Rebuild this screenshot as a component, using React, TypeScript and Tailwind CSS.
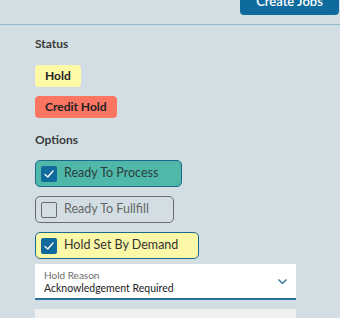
import React from "react";

function Check({ checked }: { checked: boolean }) {
  if (!checked) {
    return <div className="w-[16px] h-[16px] rounded-[2px] border border-[#6b6b6b] bg-transparent shrink-0" />;
  }
  return (
    <div className="w-[16px] h-[16px] rounded-[2px] bg-[#116a9c] shrink-0 flex items-center justify-center">
      <svg width="12" height="12" viewBox="0 0 12 12" fill="none">
        <path d="M2 6.5 L4.8 9 L10 3" stroke="white" strokeWidth="1.3" strokeLinecap="round" strokeLinejoin="round" />
      </svg>
    </div>
  );
}

export default function App() {
  return (
    <div
      className="w-[340px] h-[318px] overflow-hidden bg-[#d2dee3] text-[#333]"
      style={{ fontFamily: "Lato, 'Liberation Sans', sans-serif" }}
    >
      <div className="h-[25px] border-b border-[#8fbacb] flex justify-end items-start pr-[1px]">
        <div className="w-[99px] h-[15px] bg-[#0f6b9e] rounded-b-[4px] flex justify-center items-start overflow-hidden">
          <span className="block mt-[-5px] text-white text-[13px] font-semibold leading-[13px]">Create Jobs</span>
        </div>
      </div>
      <div className="pl-[35px] flex flex-col items-start">
        <div className="mt-[11px] text-[12px] font-bold leading-[16px] text-[#3a3a3a]">Status</div>
        <div className="mt-[13px] h-[22px] px-[10px] rounded-[4px] bg-[#fdf9a6] text-[12px] font-bold leading-[22px] text-[#222]">Hold</div>
        <div className="mt-[9px] h-[22px] px-[10px] rounded-[4px] bg-[#fb7563] text-[12px] font-bold leading-[22px] text-[#222]">Credit Hold</div>
        <div className="mt-[14px] text-[12px] font-bold leading-[16px] text-[#3a3a3a]">Options</div>
        <div className="mt-[12px] w-[147px] h-[27px] rounded-[5px] border border-[#1b6a8b] bg-[#4fb8a9] flex items-center pl-[5px] gap-[7px]">
          <Check checked />
          <span className="text-[12.5px] leading-none text-[#2b3d3d]">Ready To Process</span>
        </div>
        <div className="mt-[9px] w-[139px] h-[27px] rounded-[5px] border border-[#6b6b6b] flex items-center pl-[5px] gap-[7px]">
          <Check checked={false} />
          <span className="text-[12.5px] leading-none text-[#666]">Ready To Fullfill</span>
        </div>
        <div className="mt-[9px] w-[164px] h-[27px] rounded-[5px] border border-[#1b6a8b] bg-[#fbf8a8] flex items-center pl-[5px] gap-[7px]">
          <Check checked />
          <span className="text-[12.5px] leading-none text-[#333]">Hold Set By Demand</span>
        </div>
        <div className="mt-[5px] w-[261px] h-[36px] bg-white border-b-2 border-[#2a6e9b] flex items-center justify-between pl-[9px] pr-[9px]">
          <div className="flex flex-col pt-[2px]">
            <span className="text-[10px] leading-[12px] text-[#6b6b6b]">Hold Reason</span>
            <span className="text-[10.5px] leading-[14px] text-[#222]">Acknowledgement Required</span>
          </div>
          <svg width="9" height="5" viewBox="0 0 9 5" fill="none">
            <path d="M0.5 0.5 L4.5 4.5 L8.5 0.5" stroke="#2a6e9b" strokeWidth="1.3" />
          </svg>
        </div>
        <div className="mt-[9px] w-[261px] h-[20px] bg-[#f0f0f0]" />
      </div>
    </div>
  );
}
